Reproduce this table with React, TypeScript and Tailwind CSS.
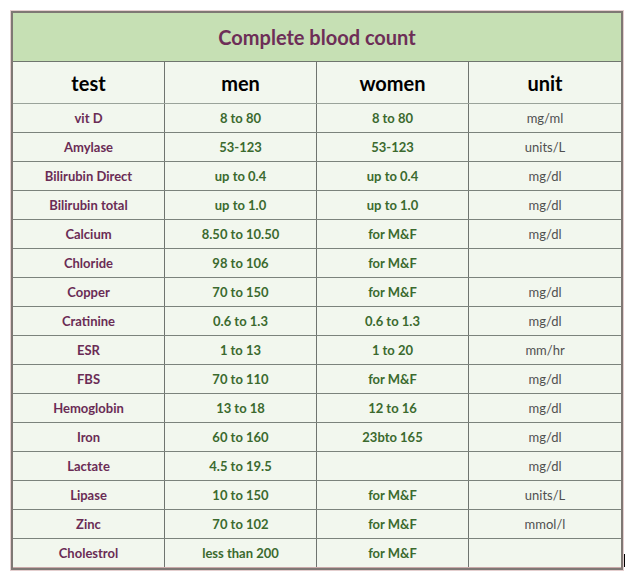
import React from "react";

const rows: [string, string, string, string][] = [
  ["vit D", "8 to 80", "8 to 80", "mg/ml"],
  ["Amylase", "53-123", "53-123", "units/L"],
  ["Bilirubin Direct", "up to 0.4", "up to 0.4", "mg/dl"],
  ["Bilirubin total", "up to 1.0", "up to 1.0", "mg/dl"],
  ["Calcium", "8.50 to 10.50", "for M&F", "mg/dl"],
  ["Chloride", "98 to 106", "for M&F", ""],
  ["Copper", "70 to 150", "for M&F", "mg/dl"],
  ["Cratinine", "0.6 to 1.3", "0.6 to 1.3", "mg/dl"],
  ["ESR", "1 to 13", "1 to 20", "mm/hr"],
  ["FBS", "70 to 110", "for M&F", "mg/dl"],
  ["Hemoglobin", "13 to 18", "12 to 16", "mg/dl"],
  ["Iron", "60 to 160", "23bto 165", "mg/dl"],
  ["Lactate", "4.5 to 19.5", "", "mg/dl"],
  ["Lipase", "10 to 150", "for M&F", "units/L"],
  ["Zinc", "70 to 102", "for M&F", "mmol/l"],
  ["Cholestrol", "less than 200", "for M&F", ""],
];

export default function App() {
  return (
    <div
      className="relative w-[638px] h-[576px] bg-white"
      style={{ fontFamily: "Lato, 'Open Sans', sans-serif" }}
    >
      <div className="pt-[10px] pl-[10px]">
        <div className="w-[614px] border border-[#e4cfcf]">
          <div className="border-2 border-[#7f7874] bg-[#f2f7ee]">
            <div className="h-[49px] bg-[#c6e0b4] border-b border-[#6f766e] flex items-center justify-center text-[20px] font-bold text-[#6d2e57]">
              Complete blood count
            </div>
            <div className="grid grid-cols-4 h-[42px] border-b border-[#9aa39a] text-[20px] font-bold text-black">
              {["test", "men", "women", "unit"].map((h, i) => (
                <div
                  key={h}
                  className={
                    "flex items-center justify-center pt-[1px] " +
                    (i < 3 ? "border-r border-[#6f746f]" : "")
                  }
                >
                  {h}
                </div>
              ))}
            </div>
            {rows.map((r, idx) => (
              <div
                key={idx}
                className={
                  "grid grid-cols-4 h-[29px] text-[13px] " +
                  (idx < rows.length - 1 ? "border-b border-[#7c837c]" : "border-b border-[#c9a9a9]")
                }
              >
                <div className="flex items-center justify-center pt-[1px] border-r border-[#6f746f] font-bold text-[#6a2c55]">
                  {r[0]}
                </div>
                <div className="flex items-center justify-center pt-[1px] border-r border-[#6f746f] font-bold text-[#3b6a2e]">
                  {r[1]}
                </div>
                <div className="flex items-center justify-center pt-[1px] border-r border-[#6f746f] font-bold text-[#3b6a2e]">
                  {r[2]}
                </div>
                <div className="flex items-center justify-center pt-[1px] text-[#505050]">
                  {r[3]}
                </div>
              </div>
            ))}
          </div>
        </div>
      </div>
      <span className="absolute left-[624px] top-[554px] w-[1px] h-[13px] bg-black" />
    </div>
  );
}
